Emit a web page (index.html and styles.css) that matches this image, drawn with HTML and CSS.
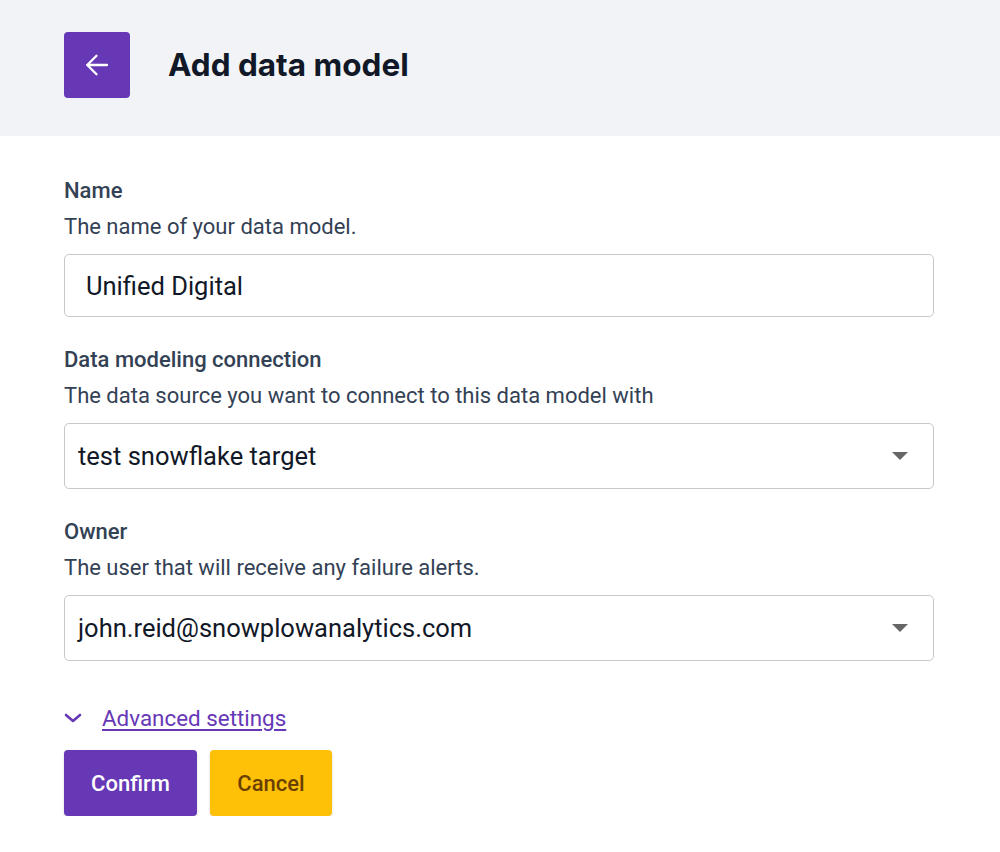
FILE: index.html
```html
<!DOCTYPE html>
<html lang="en">
<head>
<meta charset="utf-8">
<title>Add data model</title>
<link rel="stylesheet" href="styles.css">
</head>
<body>
<header class="page-header">
  <button class="back-btn" aria-label="Back">
    <svg width="24" height="24" viewBox="0 0 24 24" fill="none" stroke="#fff" stroke-width="2.3" stroke-linecap="round" stroke-linejoin="round"><path d="M22 12H2.5"/><path d="M11.5 2.8L2.3 12l9.2 9.2"/></svg>
  </button>
  <h1 class="title">Add data model</h1>
</header>
<main class="form">
  <section class="field">
    <div class="label">Name</div>
    <div class="desc">The name of your data model.</div>
    <div class="input">Unified Digital</div>
  </section>
  <section class="field">
    <div class="label">Data modeling connection</div>
    <div class="desc">The data source you want to connect to this data model with</div>
    <div class="select"><span>test snowflake target</span><span class="caret"></span></div>
  </section>
  <section class="field">
    <div class="label">Owner</div>
    <div class="desc">The user that will receive any failure alerts.</div>
    <div class="select"><span>john.reid@snowplowanalytics.com</span><span class="caret"></span></div>
  </section>
  <div class="advanced">
    <svg width="18" height="12" viewBox="0 0 18 12" fill="none" stroke="#6638b6" stroke-width="2.6" stroke-linecap="round" stroke-linejoin="round"><path d="M2 3l7 6 7-6"/></svg>
    <a class="adv-link" href="#">Advanced settings</a>
  </div>
  <div class="actions">
    <button class="btn btn-primary">Confirm</button>
    <button class="btn btn-warn">Cancel</button>
  </div>
</main>
</body>
</html>
```
FILE: styles.css
```css
* { box-sizing: border-box; }
html, body { margin: 0; padding: 0; background: #fff; }
body { font-family: Roboto, "Liberation Sans", sans-serif; color: #111827; }

.page-header {
  height: 136px;
  background: #f2f3f7;
  display: flex;
  align-items: flex-start;
  padding: 32px 0 0 64px;
  gap: 38px;
}
.back-btn {
  width: 66px; height: 66px;
  border: none; border-radius: 4px;
  background: #6638b6;
  display: flex; align-items: center; justify-content: center;
  padding: 0;
}
.title {
  margin: 0;
  font-family: Inter, "Noto Sans", sans-serif;
  font-weight: 700;
  font-size: 31.5px;
  line-height: 66px;
  color: #111827;
}

.form {
  width: 934px;
  padding: 42px 0 0 64px;
  display: flex;
  flex-direction: column;
}
.field { display: flex; flex-direction: column; margin-bottom: 30px; }
.label {
  font-size: 22px; line-height: 26px; font-weight: 500; color: #334155;
}
.desc {
  font-size: 22px; line-height: 26px; color: #334155;
  margin-top: 10px; margin-bottom: 14px;
}
.input {
  height: 63px;
  border: 1px solid #c8c8c8; border-radius: 5px;
  padding-left: 21px;
  display: flex; align-items: center;
  font-size: 25.5px; color: #111827;
}
.select {
  height: 66px;
  border: 1px solid #c8c8c8; border-radius: 5px;
  padding: 0 25px 0 13px;
  display: flex; align-items: center; justify-content: space-between;
  font-size: 25.5px; color: #111827;
}
.caret {
  width: 0; height: 0;
  border-left: 8px solid transparent;
  border-right: 8px solid transparent;
  border-top: 8px solid #666;
}

.advanced {
  display: flex; align-items: center; gap: 20px;
  margin-top: 12px;
  height: 30px;
}
.adv-link {
  font-size: 22.4px; color: #6638b6; text-decoration: underline;
  text-underline-offset: 3px;
}
.actions { display: flex; gap: 13px; margin-top: 17px; }
.btn {
  height: 66px;
  border: none; border-radius: 4px;
  font-family: Roboto, "Liberation Sans", sans-serif;
  font-size: 22px; font-weight: 500;
  padding: 0;
  box-shadow: 0 1px 3px rgba(0,0,0,0.15);
}
.btn-primary { background: #6638b6; color: #fff; width: 133px; }
.btn-warn { background: #ffc107; color: #6b3f00; width: 122px; }
```
